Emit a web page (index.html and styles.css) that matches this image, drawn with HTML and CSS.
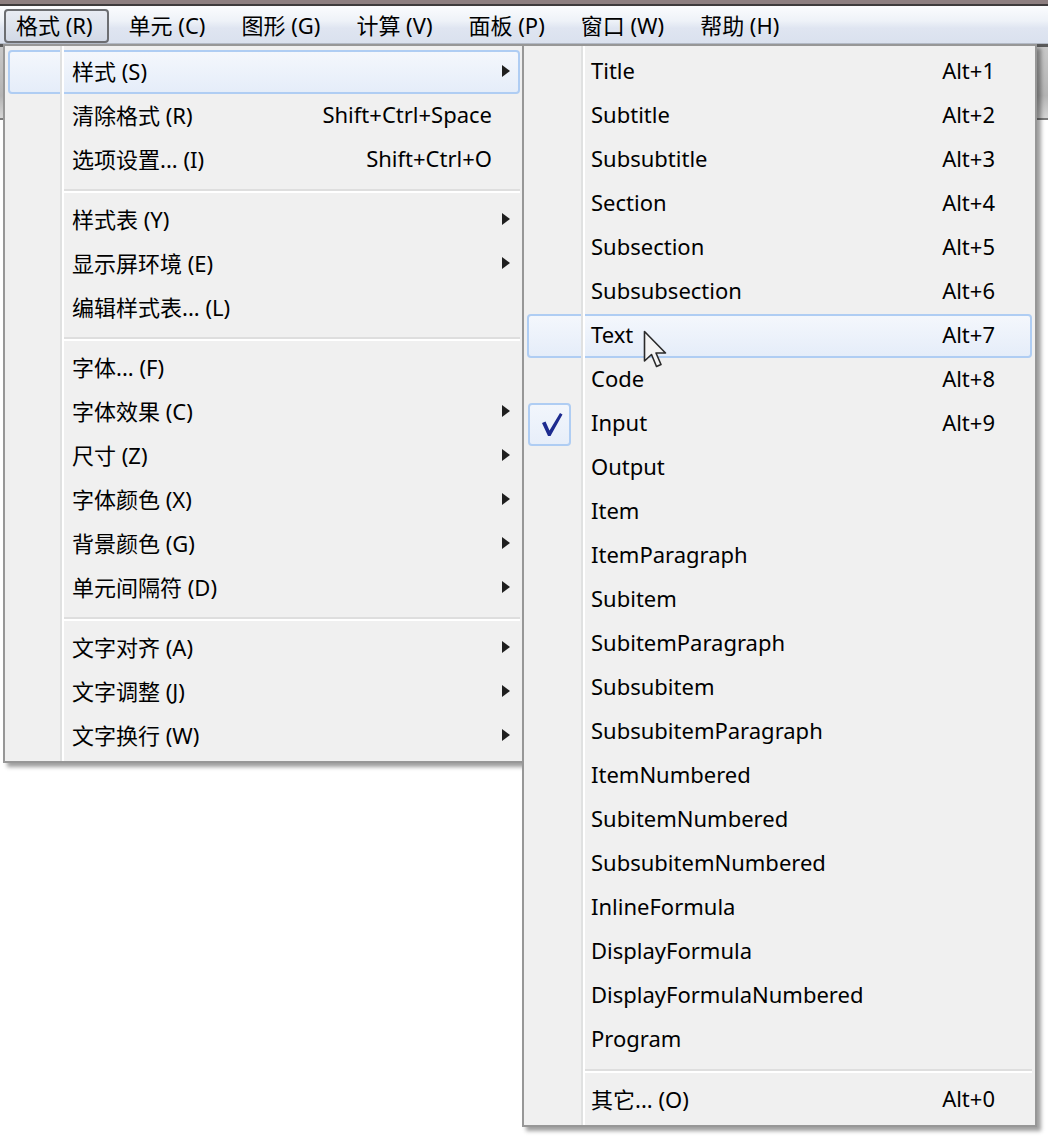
FILE: index.html
```html
<!DOCTYPE html>
<html lang="zh-CN">
<head>
    <meta charset="UTF-8">
    <title>格式</title>
    <link rel="stylesheet" href="styles.css">
</head>
<body>

    <div class="frame-top"></div>

    <!-- Строка меню -->
    <nav class="menubar">
        <div class="menubar-item open">格式 (R)</div>
        <div class="menubar-item">单元 (C)</div>
        <div class="menubar-item">图形 (G)</div>
        <div class="menubar-item">计算 (V)</div>
        <div class="menubar-item">面板 (P)</div>
        <div class="menubar-item">窗口 (W)</div>
        <div class="menubar-item">帮助 (H)</div>
    </nav>

    <div class="toolbar"></div>

    <!-- Выпадающее меню «格式» -->
    <div class="menu main-menu">
        <div class="item hover"><span class="label">样式 (S)</span><span class="arrow"></span></div>
        <div class="item"><span class="label">清除格式 (R)</span><span class="key">Shift+Ctrl+Space</span></div>
        <div class="item"><span class="label">选项设置... (I)</span><span class="key">Shift+Ctrl+O</span></div>
        <div class="sep"></div>
        <div class="item"><span class="label">样式表 (Y)</span><span class="arrow"></span></div>
        <div class="item"><span class="label">显示屏环境 (E)</span><span class="arrow"></span></div>
        <div class="item"><span class="label">编辑样式表... (L)</span></div>
        <div class="sep"></div>
        <div class="item"><span class="label">字体... (F)</span></div>
        <div class="item"><span class="label">字体效果 (C)</span><span class="arrow"></span></div>
        <div class="item"><span class="label">尺寸 (Z)</span><span class="arrow"></span></div>
        <div class="item"><span class="label">字体颜色 (X)</span><span class="arrow"></span></div>
        <div class="item"><span class="label">背景颜色 (G)</span><span class="arrow"></span></div>
        <div class="item"><span class="label">单元间隔符 (D)</span><span class="arrow"></span></div>
        <div class="sep"></div>
        <div class="item"><span class="label">文字对齐 (A)</span><span class="arrow"></span></div>
        <div class="item"><span class="label">文字调整 (J)</span><span class="arrow"></span></div>
        <div class="item"><span class="label">文字换行 (W)</span><span class="arrow"></span></div>
    </div>

    <!-- Подменю стилей -->
    <div class="menu sub-menu">
        <div class="item"><span class="label">Title</span><span class="key">Alt+1</span></div>
        <div class="item"><span class="label">Subtitle</span><span class="key">Alt+2</span></div>
        <div class="item"><span class="label">Subsubtitle</span><span class="key">Alt+3</span></div>
        <div class="item"><span class="label">Section</span><span class="key">Alt+4</span></div>
        <div class="item"><span class="label">Subsection</span><span class="key">Alt+5</span></div>
        <div class="item"><span class="label">Subsubsection</span><span class="key">Alt+6</span></div>
        <div class="item hover"><span class="label">Text</span><span class="key">Alt+7</span></div>
        <div class="item"><span class="label">Code</span><span class="key">Alt+8</span></div>
        <div class="item">
            <span class="check">
                <svg width="39" height="39" viewBox="0 0 39 39">
                    <path d="M12 18 L15.5 16.5 L19.5 25.5 L30 8 L32.5 9.5 L20.5 31 L18 31 Z" fill="#1d2b8f"/>
                </svg>
            </span>
            <span class="label">Input</span><span class="key">Alt+9</span>
        </div>
        <div class="item"><span class="label">Output</span></div>
        <div class="item"><span class="label">Item</span></div>
        <div class="item"><span class="label">ItemParagraph</span></div>
        <div class="item"><span class="label">Subitem</span></div>
        <div class="item"><span class="label">SubitemParagraph</span></div>
        <div class="item"><span class="label">Subsubitem</span></div>
        <div class="item"><span class="label">SubsubitemParagraph</span></div>
        <div class="item"><span class="label">ItemNumbered</span></div>
        <div class="item"><span class="label">SubitemNumbered</span></div>
        <div class="item"><span class="label">SubsubitemNumbered</span></div>
        <div class="item"><span class="label">InlineFormula</span></div>
        <div class="item"><span class="label">DisplayFormula</span></div>
        <div class="item"><span class="label">DisplayFormulaNumbered</span></div>
        <div class="item"><span class="label">Program</span></div>
        <div class="sep"></div>
        <div class="item"><span class="label">其它... (O)</span><span class="key">Alt+0</span></div>
    </div>

    <!-- Указатель мыши -->
    <svg class="pointer" width="26" height="40" viewBox="0 0 26 40">
        <path d="M1.5 1.5 L1.5 31 L8.5 24.5 L13.5 36.5 L18 34.5 L13 23 L22.5 23 Z"
              fill="#f4f4f4" stroke="#2a2a2a" stroke-width="1.6" stroke-linejoin="round"/>
    </svg>

</body>
</html>
```

FILE: styles.css
```css
/* Стили меню в духе Windows 7 */

:root {
    --menu-bg: #F0F0F0;
    --menu-border: #979797;
    --hover-border: #AFCDF3;
    --gutter-line: #E0E1E1;
}

body {
    margin: 0;
    width: 1048px;
    height: 1136px;
    overflow: hidden;
    position: relative;
    background-color: #FFFFFF;
    color: #000000;
    font-family: "Noto Sans", "Noto Sans CJK SC", sans-serif;
    font-size: 22px;
}

.frame-top {
    height: 4px;
    background-color: #8D7F80;
    border-bottom: 2px solid #3E3B3C;
}

.menubar {
    display: flex;
    gap: 8px;
    height: 38px;
    box-sizing: border-box;
    padding: 3px 0 0 4px;
    background: linear-gradient(#FBFCFE 0%, #EEF2F8 40%, #DFE5F1 60%, #DAE1EE 100%);
    border-bottom: 1px solid #B3BAC6;
}

.menubar-item {
    height: 34px;
    box-sizing: border-box;
    padding: 0 14px 2px 10px;
    line-height: 28px;
    border: 2px solid transparent;
    border-radius: 4px;
    white-space: nowrap;
}

.menubar-item.open {
    border-color: #6C6E72;
    background: linear-gradient(#E8ECF3, #D2D9E6);
}

.toolbar {
    height: 74px;
    background: linear-gradient(to bottom, #5A5A5A 0 3px, #C8C8C8 3px, #B4B4B4 70%, #D6D6D6);
    border-bottom: 2px solid #7B7B7B;
}

.menu {
    position: absolute;
    top: 44px;
    box-sizing: border-box;
    padding: 4px 0 3px;
    background-color: var(--menu-bg);
    border: 2px solid var(--menu-border);
    box-shadow: 4px 4px 4px rgba(0, 0, 0, 0.38);
}

/* Вертикальная линия слева от текста */
.menu::before {
    content: "";
    position: absolute;
    top: 0;
    bottom: 0;
    width: 2px;
    background-color: var(--gutter-line);
    border-right: 2px solid #FFFFFF;
    z-index: 1;
}

.main-menu {
    left: 3px;
    width: 522px;
    z-index: 2;
}

.main-menu::before {
    left: 55px;
}

.sub-menu {
    left: 522px;
    width: 515px;
    z-index: 3;
}

.sub-menu::before {
    left: 57px;
}

.item {
    position: relative;
    display: flex;
    align-items: center;
    height: 44px;
    box-sizing: border-box;
    margin: 0 3px;
    padding: 0 26px 4px 62px;
    border: 2px solid transparent;
    border-radius: 4px;
    white-space: nowrap;
}

.sub-menu .item {
    padding-right: 35px;
}

.item .label {
    flex: 1;
}

.item.hover {
    border-color: var(--hover-border);
    background: linear-gradient(#F4F7FC, #E5EDF9);
}

.arrow {
    position: absolute;
    right: 8px;
    top: 50%;
    margin-top: -7px;
    width: 0;
    height: 0;
    border-left: 8px solid #1F1F1F;
    border-top: 6px solid transparent;
    border-bottom: 6px solid transparent;
}

.check {
    position: absolute;
    left: -1px;
    top: -1px;
    width: 43px;
    height: 43px;
    box-sizing: border-box;
    display: flex;
    align-items: center;
    justify-content: center;
    border: 2px solid var(--hover-border);
    border-radius: 4px;
    background: linear-gradient(#F2F6FC, #E7EEF9);
}

.sep {
    height: 2px;
    margin: 7px 3px 5px 59px;
    background-color: #DEDEDE;
    border-bottom: 2px solid #FFFFFF;
}

.pointer {
    position: absolute;
    left: 643px;
    top: 330px;
    z-index: 5;
}
```
